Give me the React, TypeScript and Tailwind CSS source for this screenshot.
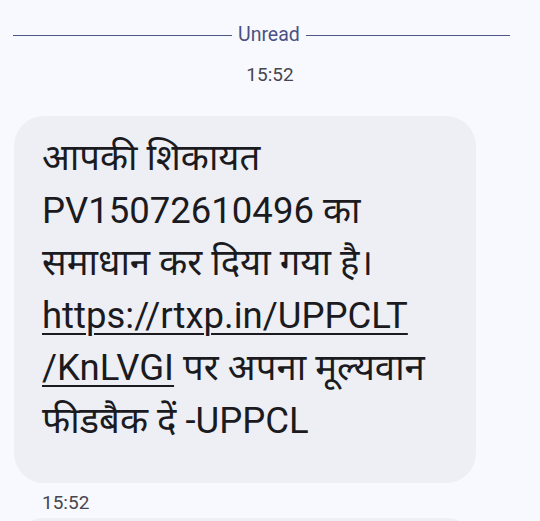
export default function App() {
  return (
    <div className="w-[540px] h-[521px] overflow-hidden bg-[#f8f9fe] font-['Roboto','Noto_Sans',sans-serif]">
      <div className="flex items-center gap-[6px] pl-[13px] pr-[30px] pt-[24px]">
        <div className="h-px w-[219px] bg-[#4f5785]" />
        <span className="text-[19.5px] leading-[22px] text-[#4a5283]">Unread</span>
        <div className="h-px flex-1 bg-[#4f5785]" />
      </div>
      <div className="mt-[18px] text-center text-[19px] leading-[22px] text-[#46464f]">15:52</div>

      <div className="ml-[14px] mt-[30px] w-[462px] rounded-[30px] bg-[#edeff4] pl-[28px] pr-4 pt-4 pb-[36px] text-[36.5px] leading-[52.5px] text-[#1b1b1f]">
        <div>आपकी शिकायत</div>
        <div>PV15072610496 का</div>
        <div>समाधान कर दिया गया है।</div>
        <div>
          <span className="underline decoration-2 underline-offset-[5px]">https://rtxp.in/UPPCLT</span>
        </div>
        <div>
          <span className="underline decoration-2 underline-offset-[5px]">/KnLVGI</span> पर अपना मूल्यवान
        </div>
        <div>फीडबैक दें -UPPCL</div>
      </div>

      <div className="mt-[9px] pl-[42px] text-[19px] leading-[22px] text-[#46464f]">15:52</div>
      <div className="ml-[14px] mt-[4px] h-[60px] w-[462px] rounded-t-[30px] bg-[#edeff4]" />
    </div>
  );
}
